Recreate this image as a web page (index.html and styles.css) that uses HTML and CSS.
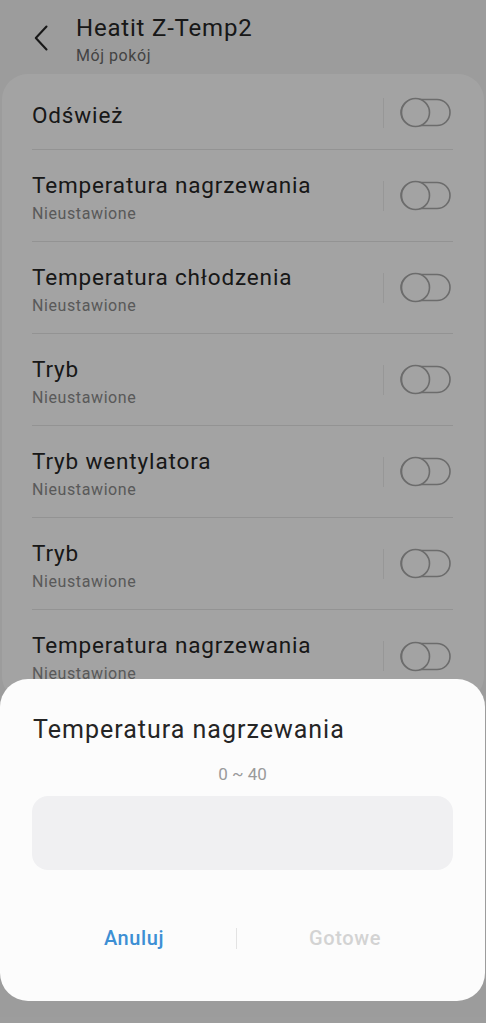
FILE: index.html
```html
<!DOCTYPE html>
<html lang="pl">
<head>
<meta charset="utf-8">
<title>Heatit Z-Temp2</title>
<link rel="stylesheet" href="styles.css">
</head>
<body>
<div class="screen">
  <header class="appbar">
    <svg class="back" width="14" height="26" viewBox="0 0 14 26"><path d="M12.5 1.5 L1.8 13 L12.5 24.5" fill="none" stroke="#262626" stroke-width="2.1" stroke-linecap="round" stroke-linejoin="round"/></svg>
    <div class="titles">
      <div class="title">Heatit Z-Temp2</div>
      <div class="subtitle">Mój pokój</div>
    </div>
  </header>

  <main class="card">
    <div class="row single">
      <div class="texts"><div class="label">Odśwież</div></div>
      <span class="vsep"></span>
      <svg class="toggle" width="51" height="31" viewBox="0 0 51 31"><rect x="1" y="2.5" width="49" height="26" rx="13" fill="none" stroke="#a9a9a9" stroke-width="1.6"/><circle cx="15.5" cy="15.5" r="14" fill="#fff" stroke="#a9a9a9" stroke-width="1.6"/></svg>
    </div>
    <div class="row">
      <div class="texts"><div class="label">Temperatura nagrzewania</div><div class="sub">Nieustawione</div></div>
      <span class="vsep"></span>
      <svg class="toggle" width="51" height="31" viewBox="0 0 51 31"><rect x="1" y="2.5" width="49" height="26" rx="13" fill="none" stroke="#a9a9a9" stroke-width="1.6"/><circle cx="15.5" cy="15.5" r="14" fill="#fff" stroke="#a9a9a9" stroke-width="1.6"/></svg>
    </div>
    <div class="row">
      <div class="texts"><div class="label">Temperatura chłodzenia</div><div class="sub">Nieustawione</div></div>
      <span class="vsep"></span>
      <svg class="toggle" width="51" height="31" viewBox="0 0 51 31"><rect x="1" y="2.5" width="49" height="26" rx="13" fill="none" stroke="#a9a9a9" stroke-width="1.6"/><circle cx="15.5" cy="15.5" r="14" fill="#fff" stroke="#a9a9a9" stroke-width="1.6"/></svg>
    </div>
    <div class="row">
      <div class="texts"><div class="label">Tryb</div><div class="sub">Nieustawione</div></div>
      <span class="vsep"></span>
      <svg class="toggle" width="51" height="31" viewBox="0 0 51 31"><rect x="1" y="2.5" width="49" height="26" rx="13" fill="none" stroke="#a9a9a9" stroke-width="1.6"/><circle cx="15.5" cy="15.5" r="14" fill="#fff" stroke="#a9a9a9" stroke-width="1.6"/></svg>
    </div>
    <div class="row">
      <div class="texts"><div class="label">Tryb wentylatora</div><div class="sub">Nieustawione</div></div>
      <span class="vsep"></span>
      <svg class="toggle" width="51" height="31" viewBox="0 0 51 31"><rect x="1" y="2.5" width="49" height="26" rx="13" fill="none" stroke="#a9a9a9" stroke-width="1.6"/><circle cx="15.5" cy="15.5" r="14" fill="#fff" stroke="#a9a9a9" stroke-width="1.6"/></svg>
    </div>
    <div class="row">
      <div class="texts"><div class="label">Tryb</div><div class="sub">Nieustawione</div></div>
      <span class="vsep"></span>
      <svg class="toggle" width="51" height="31" viewBox="0 0 51 31"><rect x="1" y="2.5" width="49" height="26" rx="13" fill="none" stroke="#a9a9a9" stroke-width="1.6"/><circle cx="15.5" cy="15.5" r="14" fill="#fff" stroke="#a9a9a9" stroke-width="1.6"/></svg>
    </div>
    <div class="row last">
      <div class="texts"><div class="label">Temperatura nagrzewania</div><div class="sub">Nieustawione</div></div>
      <span class="vsep"></span>
      <svg class="toggle" width="51" height="31" viewBox="0 0 51 31"><rect x="1" y="2.5" width="49" height="26" rx="13" fill="none" stroke="#a9a9a9" stroke-width="1.6"/><circle cx="15.5" cy="15.5" r="14" fill="#fff" stroke="#a9a9a9" stroke-width="1.6"/></svg>
    </div>
  </main>

  <div class="scrim"></div>

  <section class="dialog">
    <h2 class="dtitle">Temperatura nagrzewania</h2>
    <div class="range">0 ~ 40</div>
    <div class="input"></div>
    <div class="actions">
      <span class="btn cancel">Anuluj</span>
      <span class="asep"></span>
      <span class="btn done">Gotowe</span>
    </div>
  </section>
</div>
</body>
</html>
```

FILE: styles.css
```css
* { box-sizing: border-box; }
html, body { margin: 0; padding: 0; }
body {
  font-family: Roboto, "Noto Sans", "Liberation Sans", sans-serif;
  background: #f5f5f5;
  color: #272727;
}
.screen {
  position: relative;
  width: 486px;
  height: 1023px;
  overflow: hidden;
  background: #f5f5f5;
}
.appbar {
  display: flex;
  align-items: flex-start;
  height: 74px;
  padding: 13px 0 0 34px;
}
.back { margin-top: 12px; flex: none; }
.titles { margin-left: 28px; }
.title {
  font-size: 24px;
  line-height: 30px;
  letter-spacing: 0.8px;
  color: #262626;
}
.subtitle {
  font-size: 16px;
  line-height: 20px;
  letter-spacing: 0.55px;
  color: #6a6a6a;
  margin-top: 3px;
}
.card {
  margin: 0 2px;
  background: #fff;
  border-radius: 26px;
  padding: 2px 31px 0 30px;
  height: 628px;
}
.row {
  display: flex;
  align-items: center;
  height: 92px;
  border-bottom: 1px solid #e6e6e6;
}
.row.single { height: 74px; }
.row.last { border-bottom: none; }
.texts { flex: 1; min-width: 0; padding-top: 4px; }
.single .texts { padding-top: 6px; }
.label {
  font-size: 22.5px;
  line-height: 27px;
  letter-spacing: 0.85px;
  color: #262626;
}
.sub {
  font-size: 16px;
  line-height: 21px;
  letter-spacing: 0.6px;
  color: #8c8c8c;
  margin-top: 4px;
}
.vsep {
  width: 1px;
  height: 30px;
  background: #ededed;
  margin-right: 16px;
  flex: none;
}
.toggle { flex: none; margin-right: 2px; }
.scrim {
  position: absolute;
  inset: 0;
  background: rgba(0, 0, 0, 0.36);
}
.dialog {
  position: absolute;
  left: 0;
  right: 1px;
  top: 679px;
  height: 322px;
  background: #fcfcfc;
  border-radius: 28px;
  padding: 34px 32px 0 32px;
}
.dtitle {
  margin: 0;
  font-weight: 400;
  font-size: 25px;
  line-height: 34px;
  letter-spacing: 1px;
  color: #252525;
  padding-left: 1px;
}
.range {
  text-align: center;
  font-size: 17px;
  line-height: 22px;
  color: #9a9a9a;
  margin-top: 16px;
}
.input {
  margin-top: 11px;
  height: 74px;
  background: #f0f0f2;
  border-radius: 16px;
  width: 421px;
}
.actions {
  display: grid;
  grid-template-columns: 204px 1px 1fr;
  align-items: center;
  margin-top: 48px;
  height: 40px;
}
.btn {
  text-align: center;
  font-size: 20px;
  font-weight: 500;
  letter-spacing: 0.6px;
}
.cancel { color: #3d8fd4; }
.done { color: #d3d3d3; }
.asep {
  height: 21px;
  background: #e3e3e3;
}
```
